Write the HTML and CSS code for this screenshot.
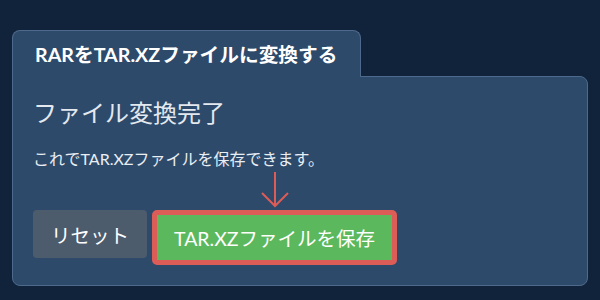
FILE: index.html
```html
<!DOCTYPE html>
<html lang="ja">
<head>
    <meta charset="UTF-8">
    <meta name="viewport" content="width=device-width, initial-scale=1.0">
    <title>RARをTAR.XZファイルに変換する</title>
    <link rel="stylesheet" href="styles.css">
</head>
<body>
    <div class="converter">
        <!-- Tab header -->
        <div class="tab">RARをTAR.XZファイルに変換する</div>

        <!-- Result panel -->
        <div class="panel">
            <h2>ファイル変換完了</h2>
            <p>これでTAR.XZファイルを保存できます。</p>

            <div class="actions">
                <div class="arrow">
                    <svg width="28" height="36" viewBox="0 0 28 36">
                        <line x1="14" y1="0" x2="14" y2="34" />
                        <polyline points="1,21 14,34 27,21" />
                    </svg>
                </div>
                <button class="btn btn-reset">リセット</button>
                <button class="btn btn-save">TAR.XZファイルを保存</button>
            </div>
        </div>
    </div>
</body>
</html>
```

FILE: styles.css
```css
body {
    background-color: #11233a;
    color: #e9eef3;
    font-family: Lato, "Noto Sans CJK JP", sans-serif;
    margin: 0;
    padding: 0;
}

.converter {
    padding: 30px 12px 14px;
}

.tab {
    display: inline-block;
    position: relative;
    z-index: 1;
    background-color: #2d4a6b;
    border: 1px solid #4d6a8c;
    border-bottom: none;
    border-radius: 8px 8px 0 0;
    padding: 12px 23px 10px 22px;
    margin-bottom: -1px;
    font-size: 19.7px;
    font-weight: bold;
    line-height: 24px;
    color: #fff;
}

.panel {
    background-color: #2d4a6b;
    border: 1px solid #4d6a8c;
    border-radius: 0 8px 8px 8px;
    padding: 21px 20px 20px;
}

h2 {
    margin: 0;
    font-size: 24px;
    font-weight: normal;
    line-height: 30px;
    color: #e4e9ef;
}

p {
    margin: 20px 0 0;
    font-size: 16px;
    line-height: 22px;
}

/* Buttons with arrow pointing at the save button */
.actions {
    display: grid;
    grid-template-columns: auto auto;
    justify-content: start;
    align-items: start;
    column-gap: 5px;
}

.arrow {
    grid-column: 2;
    justify-self: center;
    padding: 2px 0;
    height: 36px;
}

.arrow svg {
    display: block;
    fill: none;
    stroke: #dc5c57;
    stroke-width: 2;
}

.btn {
    font-family: Lato, "Noto Sans CJK JP", sans-serif;
    font-size: 19.5px;
    color: #fff;
    border: none;
    cursor: pointer;
}

.btn-reset {
    grid-column: 1;
    background-color: #4d5c6d;
    border-radius: 4px;
    height: 48px;
    padding: 0 18px;
}

.btn-save {
    grid-column: 2;
    background-color: #5cb85c;
    border: 5px solid #dc5c57;
    border-radius: 5px;
    height: 55px;
    padding: 0 17px;
}
```
